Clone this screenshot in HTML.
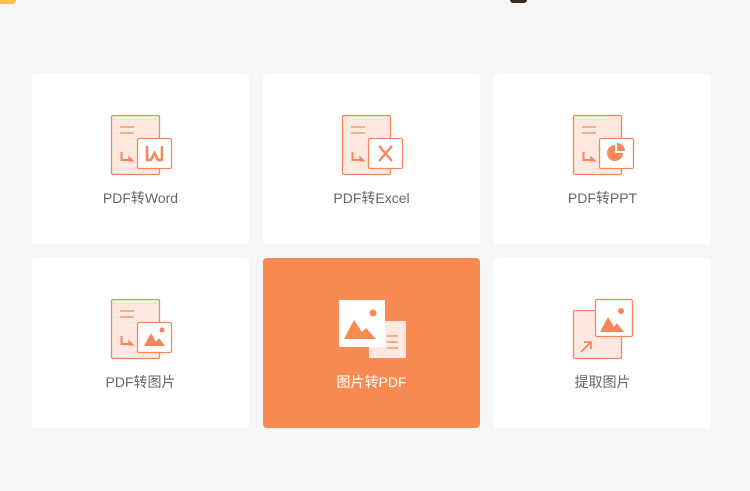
<!DOCTYPE html>
<html><head><meta charset="utf-8"><style>
body{margin:0;width:750px;height:491px;background:#f6f6f6;position:relative;overflow:hidden;font-family:"Liberation Sans","Noto Sans CJK SC",sans-serif}
.c{position:absolute;width:217px;height:170px;background:#fff;border-radius:4px}
.c svg{position:absolute;left:0;top:0}
.t{position:absolute;left:0;width:100%;top:114px;text-align:center;font-size:14px;color:#666}
.o{background:#f98b52}.o .t{color:#fff}
</style></head><body>
<div style="position:absolute;left:0;top:0;width:16px;height:4px;background:#fbbf45;border-radius:0 0 4px 0"></div>
<div style="position:absolute;left:510px;top:0;width:17px;height:3px;background:#3a2a20;border-radius:0 0 8px 8px"></div>

<div class="c" style="left:32px;top:74px"><svg width="217" height="170">
<g fill="none" stroke="#f5875a" stroke-width="1.3">
<rect x="79.5" y="41.5" width="48" height="59" rx="1.5" fill="#fde9e0"/>
<path d="M88 53h14M88 59h14"/><path d="M89.5 78v8h8" stroke-width="2"/><path d="M97 83l4 4h-4z" fill="#f5875a"/>
<rect x="105.5" y="64.5" width="34" height="30" rx="1.5" fill="#fff"/>
<path d="M115 72v14h4l3.5-7l3.5 7h4v-14" stroke-width="2.6" stroke-linejoin="miter"/></g></svg>
<div class="t">PDF转Word</div></div>

<div class="c" style="left:263px;top:74px"><svg width="217" height="170">
<g fill="none" stroke="#f5875a" stroke-width="1.3">
<rect x="79.5" y="41.5" width="48" height="59" rx="1.5" fill="#fde9e0"/>
<path d="M88 53h14M88 59h14"/><path d="M89.5 78v8h8" stroke-width="2"/><path d="M97 83l4 4h-4z" fill="#f5875a"/>
<rect x="105.5" y="64.5" width="34" height="30" rx="1.5" fill="#fff"/>
<path d="M116 72l13 15M129 72l-13 15" stroke-width="2.4"/></g></svg>
<div class="t">PDF转Excel</div></div>

<div class="c" style="left:494px;top:74px"><svg width="217" height="170">
<g fill="none" stroke="#f5875a" stroke-width="1.3">
<rect x="79.5" y="41.5" width="48" height="59" rx="1.5" fill="#fde9e0"/>
<path d="M88 53h14M88 59h14"/><path d="M89.5 78v8h8" stroke-width="2"/><path d="M97 83l4 4h-4z" fill="#f5875a"/>
<rect x="105.5" y="64.5" width="34" height="30" rx="1.5" fill="#fff"/></g>
<path d="M121 71a8 8 0 1 0 8 8h-8z" fill="#f5875a"/><path d="M123 69a8 8 0 0 1 8 8h-8z" fill="#f5875a"/></svg>
<div class="t">PDF转PPT</div></div>

<div class="c" style="left:32px;top:258px"><svg width="217" height="170">
<g fill="none" stroke="#f5875a" stroke-width="1.3">
<rect x="79.5" y="41.5" width="48" height="59" rx="1.5" fill="#fde9e0"/>
<path d="M88 53h14M88 59h14"/><path d="M89.5 78v8h8" stroke-width="2"/><path d="M97 83l4 4h-4z" fill="#f5875a"/>
<rect x="105.5" y="64.5" width="34" height="30" rx="1.5" fill="#fff"/></g>
<path d="M112 88l7-13l5 9l3-4l6 8z" fill="#f5875a"/><circle cx="130" cy="72" r="2.5" fill="#f5875a"/></svg>
<div class="t">PDF转图片</div></div>

<div class="c o" style="left:263px;top:258px"><svg width="217" height="170">
<rect x="106" y="63" width="37" height="37" fill="#fde9e0"/>
<path d="M124 78h11M124 84h11M124 90h11" stroke="#f98b52" stroke-width="1.3"/>
<rect x="76" y="42" width="46" height="47" fill="#fff"/>
<path d="M81 81l10-19l8 12l4-4l10 11z" fill="#f98b52"/><circle cx="110" cy="55" r="3.5" fill="#f98b52"/></svg>
<div class="t">图片转PDF</div></div>

<div class="c" style="left:494px;top:258px"><svg width="217" height="170">
<g fill="none" stroke="#f5875a" stroke-width="1.3">
<rect x="79.5" y="52.5" width="48" height="48" rx="1.5" fill="#fde9e0"/>
<path d="M87 94l10-10M90 84h7v7" stroke-width="1.8"/>
<rect x="101.5" y="41.5" width="37" height="37" rx="1.5" fill="#fff"/></g>
<path d="M106 74l8-15l6 10l3-4l7 9z" fill="#f5875a"/><circle cx="127" cy="53" r="3" fill="#f5875a"/></svg>
<div class="t">提取图片</div></div>
</body></html>
